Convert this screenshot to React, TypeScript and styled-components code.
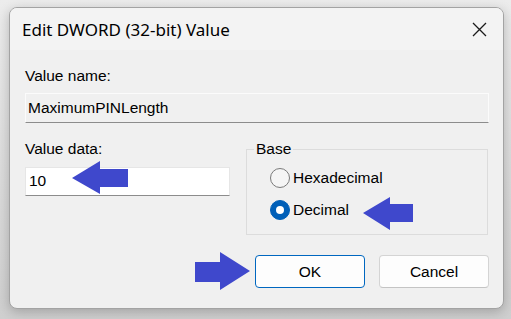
import React from "react";
import styled, { createGlobalStyle } from "styled-components";

const Global = createGlobalStyle`
  html, body { margin: 0; padding: 0; }
  body {
    background: #e4e4e4;
    width: 511px;
    height: 319px;
    overflow: hidden;
    font-family: "Liberation Sans", Arial, sans-serif;
  }
`;

const Root = styled.div`
  position: relative;
  width: 511px;
  height: 319px;
  padding: 7px 0 0 9px;
  box-sizing: border-box;
  background: linear-gradient(180deg, #ececec 0%, #dadada 60%, #cfcfcf 100%);
`;

const Window = styled.div`
  width: 495px;
  height: 302px;
  box-sizing: border-box;
  border: 1px solid #a3a3a3;
  border-radius: 8px;
  background: #f0f0f0;
  box-shadow: 0 3px 12px rgba(0, 0, 0, 0.22);
  display: flex;
  flex-direction: column;
  overflow: hidden;
`;

const TitleBar = styled.div`
  height: 42px;
  flex: none;
  background: #f3f3f3;
  display: flex;
  align-items: center;
  justify-content: space-between;
  padding: 1px 16px 0 12px;
  box-sizing: border-box;
`;

const Title = styled.span`
  font-family: "Noto Sans", "Open Sans", sans-serif;
  font-size: 17px;
  line-height: 23px;
  color: #000;
`;

const CloseIcon = styled.svg`
  width: 15px;
  height: 15px;
  display: block;
`;

const Body = styled.div`
  flex: 1;
  display: flex;
  flex-direction: column;
  padding: 17px 14px 0 15px;
  font-size: 15.5px;
  line-height: 18px;
  color: #000;
`;

const Label = styled.div`
  height: 18px;
`;

const TextBox = styled.div<{ $readonly?: boolean }>`
  box-sizing: border-box;
  height: ${(p) => (p.$readonly ? "30px" : "29px")};
  border: 1px solid ${(p) => (p.$readonly ? "#fbfbfb" : "#e6e6e6")};
  border-bottom-color: #8c8c8c;
  background: ${(p) => (p.$readonly ? "#f0f0f0" : "#ffffff")};
  padding: ${(p) => (p.$readonly ? "5px 2px 0" : "4px 3px 0")};
  margin-top: ${(p) => (p.$readonly ? "8px" : "9px")};
`;

const LowerRow = styled.div`
  display: flex;
  gap: 16px;
  margin-top: 17px;
  padding-right: 1px;
`;

const DataColumn = styled.div`
  width: 205px;
  display: flex;
  flex-direction: column;
`;

const GroupBox = styled.fieldset`
  flex: 1;
  margin: 0;
  padding: 10px 0 14px 0;
  border: 1px solid #dcdcdc;
  min-width: 0;
  display: flex;
  flex-direction: column;
  gap: 12px;
`;

const Legend = styled.legend`
  margin-left: 7px;
  padding: 0 2px;
  line-height: 18px;
`;

const RadioRow = styled.div`
  display: flex;
  align-items: center;
  gap: 3px;
  height: 20px;
  padding-left: 23px;
`;

const RadioCircle = styled.span<{ $checked?: boolean }>`
  width: 20px;
  height: 20px;
  box-sizing: border-box;
  border-radius: 50%;
  border: 1px solid ${(p) => (p.$checked ? "#005fb8" : "#7a7a7a")};
  background: ${(p) => (p.$checked ? "#005fb8" : "#f5f5f5")};
  display: flex;
  align-items: center;
  justify-content: center;
  flex: none;
  &::after {
    content: "";
    display: ${(p) => (p.$checked ? "block" : "none")};
    width: 8px;
    height: 8px;
    border-radius: 50%;
    background: #fff;
  }
`;

const ButtonRow = styled.div`
  display: flex;
  justify-content: flex-end;
  gap: 14px;
  margin-top: 20px;
`;

const Button = styled.div<{ $primary?: boolean }>`
  width: 110px;
  height: 33px;
  box-sizing: border-box;
  border-radius: 4px;
  background: #fdfdfd;
  border: 1px solid ${(p) => (p.$primary ? "#0067c0" : "#d4d4d4")};
  border-bottom-color: ${(p) => (p.$primary ? "#0067c0" : "#c4c4c4")};
  display: flex;
  align-items: center;
  justify-content: center;
  font-size: 15.5px;
`;

const Arrow = styled.svg<{ $x: number; $y: number }>`
  position: absolute;
  left: ${(p) => p.$x}px;
  top: ${(p) => p.$y}px;
  overflow: visible;
`;

const ARROW = "#3f48cc";

export default function App() {
  return (
    <Root>
      <Global />
      <Window>
        <TitleBar>
          <Title>Edit DWORD (32-bit) Value</Title>
          <CloseIcon viewBox="0 0 15 15">
            <path d="M1 1 L14 14 M14 1 L1 14" stroke="#1a1a1a" strokeWidth="1.3" fill="none" />
          </CloseIcon>
        </TitleBar>
        <Body>
          <Label>Value name:</Label>
          <TextBox $readonly>MaximumPINLength</TextBox>
          <LowerRow>
            <DataColumn>
              <Label>Value data:</Label>
              <TextBox>10</TextBox>
            </DataColumn>
            <GroupBox>
              <Legend>Base</Legend>
              <RadioRow>
                <RadioCircle />
                <span>Hexadecimal</span>
              </RadioRow>
              <RadioRow>
                <RadioCircle $checked />
                <span>Decimal</span>
              </RadioRow>
            </GroupBox>
          </LowerRow>
          <ButtonRow>
            <Button $primary>OK</Button>
            <Button>Cancel</Button>
          </ButtonRow>
        </Body>
      </Window>
      <Arrow $x={72} $y={161} width="56" height="33" viewBox="0 0 56 33">
        <polygon points="0,17 28,0 28,8 56,8 56,26 28,26 28,33" fill={ARROW} />
      </Arrow>
      <Arrow $x={363} $y={197} width="50" height="33" viewBox="0 0 50 33">
        <polygon points="0,16 27,0 27,7 50,7 50,25 27,25 27,33" fill={ARROW} />
      </Arrow>
      <Arrow $x={195} $y={252} width="55" height="38" viewBox="0 0 55 38">
        <polygon points="0,10 25,10 25,0 55,19 25,38 25,30 0,30" fill={ARROW} />
      </Arrow>
    </Root>
  );
}
